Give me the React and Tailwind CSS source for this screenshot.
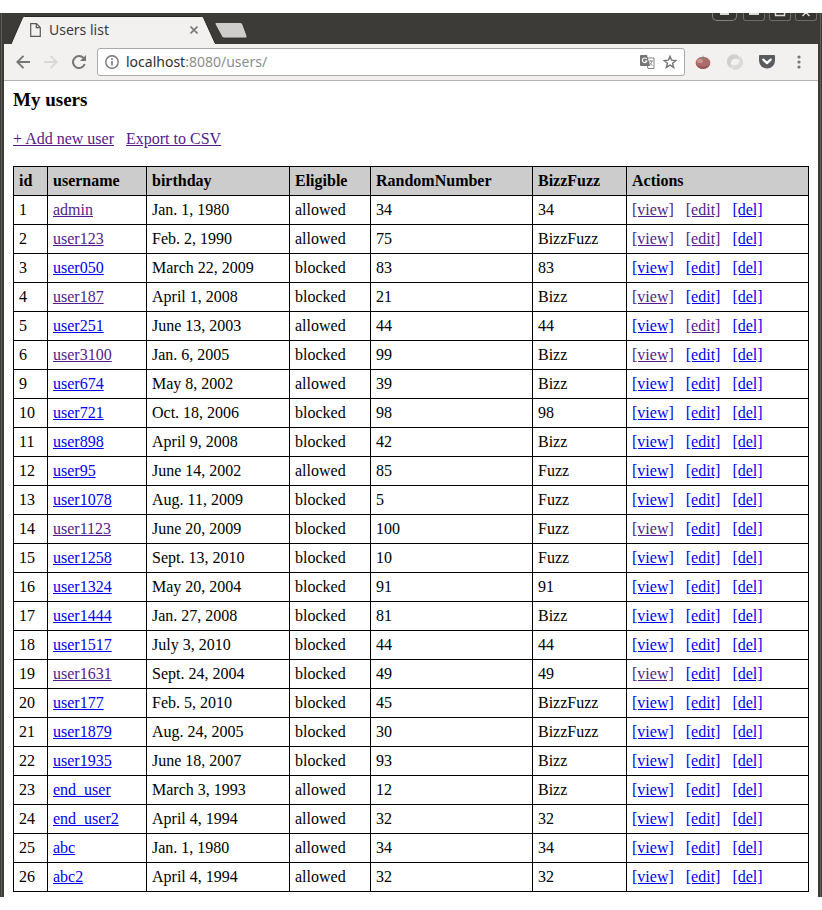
const VISITED = "text-[#551a8b] underline";
const LINK = "text-[#0000ee] underline";

// id, username, birthday, eligible, number, bizzfuzz, visited flags (u = user, v = view, e = edit)
const USERS = [
  [1, "admin", "Jan. 1, 1980", "allowed", 34, "34", "uve"],
  [2, "user123", "Feb. 2, 1990", "allowed", 75, "BizzFuzz", "uve"],
  [3, "user050", "March 22, 2009", "blocked", 83, "83", ""],
  [4, "user187", "April 1, 2008", "blocked", 21, "Bizz", "uv"],
  [5, "user251", "June 13, 2003", "allowed", 44, "44", "e"],
  [6, "user3100", "Jan. 6, 2005", "blocked", 99, "Bizz", "uv"],
  [9, "user674", "May 8, 2002", "allowed", 39, "Bizz", ""],
  [10, "user721", "Oct. 18, 2006", "blocked", 98, "98", ""],
  [11, "user898", "April 9, 2008", "blocked", 42, "Bizz", ""],
  [12, "user95", "June 14, 2002", "allowed", 85, "Fuzz", ""],
  [13, "user1078", "Aug. 11, 2009", "blocked", 5, "Fuzz", ""],
  [14, "user1123", "June 20, 2009", "blocked", 100, "Fuzz", "uv"],
  [15, "user1258", "Sept. 13, 2010", "blocked", 10, "Fuzz", ""],
  [16, "user1324", "May 20, 2004", "blocked", 91, "91", ""],
  [17, "user1444", "Jan. 27, 2008", "blocked", 81, "Bizz", ""],
  [18, "user1517", "July 3, 2010", "blocked", 44, "44", ""],
  [19, "user1631", "Sept. 24, 2004", "blocked", 49, "49", "uv"],
  [20, "user177", "Feb. 5, 2010", "blocked", 45, "BizzFuzz", ""],
  [21, "user1879", "Aug. 24, 2005", "blocked", 30, "BizzFuzz", ""],
  [22, "user1935", "June 18, 2007", "blocked", 93, "Bizz", ""],
  [23, "end_user", "March 3, 1993", "allowed", 12, "Bizz", ""],
  [24, "end_user2", "April 4, 1994", "allowed", 32, "32", ""],
  [25, "abc", "Jan. 1, 1980", "allowed", 34, "34", ""],
  [26, "abc2", "April 4, 1994", "allowed", 32, "32", ""],
];

const COLUMNS = [
  ["id", "w-[34px]"],
  ["username", "w-[99px]"],
  ["birthday", "w-[143px]"],
  ["Eligible", "w-[81px]"],
  ["RandomNumber", "w-[162px]"],
  ["BizzFuzz", "w-[94px]"],
  ["Actions", ""],
];

function WindowButton({ label, children }) {
  return (
    <button aria-label={label} className="h-2 w-[22px] rounded-b-[3px] border border-t-0 border-[#6d6c67] bg-[#353430]">
      <svg viewBox="0 0 20 7" className="block h-[7px] w-5" fill="none" stroke="#dfdbd2" strokeWidth="1.5">
        {children}
      </svg>
    </button>
  );
}

function TitleBar() {
  return (
    <header className="flex h-[31px] items-end bg-[#3c3b37] pr-px pl-[7px]">
      <div className="relative flex h-7 w-[205px] items-center pr-[14px] pl-[19px]">
        <svg viewBox="0 0 205 28" className="absolute inset-0 h-7 w-[205px]">
          <path d="M0 28 11.5 1.8Q12.200 .5 13.500 .5H190.500Q192 .5 192.600 1.800L204.500 28Z" fill="#f2f1f0" stroke="#292824" />
          <path d="M1 27H204V28H1Z" fill="#f2f1f0" />
        </svg>
        <svg viewBox="0 0 11 14" className="relative h-[14px] w-[11px]" fill="none" stroke="#5a5a5a" strokeWidth="1.200">
          <path d="M.7 .7H6.500L10.300 4.500V13.300H.7ZM6.300 .9V4.700H10.100" />
        </svg>
        <span className="relative ml-2 flex-1 font-['Noto_Sans','Open_Sans',sans-serif] text-[14px] leading-5 text-[#3b3b3b]">Users list</span>
        <button aria-label="Close tab" className="relative flex h-4 w-4 items-center justify-center">
          <svg viewBox="0 0 8 8" className="h-2 w-2" stroke="#7a7a7a" strokeWidth="1.600">
            <path d="M.5 .5 7.500 7.500M7.500 .5 .5 7.500" />
          </svg>
        </button>
      </div>
      <button aria-label="New tab" className="-ml-[2px] mb-[5px] h-[17px] w-[34px]">
        <svg viewBox="0 0 34 17" className="h-[17px] w-[34px]">
          <path d="M2 .5H26Q28 .5 28.600 2L33 14Q33.600 16 32 16H10Q8.500 16 7.800 14.500L1 2Q.6 .5 2 .5Z" fill="#cfcdcb" stroke="#292824" strokeWidth=".8" />
        </svg>
      </button>
      <div className="ml-auto flex gap-1 self-start">
        <div className="mr-[2px] flex">
          <button aria-label="Account" className="h-2 w-[25px] rounded-b-[5px] border border-t-0 border-[#85837c] bg-[#353430]">
            <svg viewBox="0 0 23 7" className="block h-[7px] w-[23px]">
              <path d="M7 0H16V2H7Z" fill="#dfdbd2" />
            </svg>
          </button>
        </div>
        <WindowButton label="Minimize"><path d="M5 1H15" strokeWidth="2" /></WindowButton>
        <WindowButton label="Maximize"><path d="M5.500 0V2.500H14.500V0" /></WindowButton>
        <WindowButton label="Close"><path d="M6.500 3 10-.5 13.500 3" /></WindowButton>
      </div>
    </header>
  );
}

function Toolbar() {
  return (
    <nav className="flex h-[37px] items-center border-b border-[#b2b2b2] bg-[#f2f1f0] pl-3 pr-[11px]">
      <div className="flex items-center gap-[14px]">
        <button aria-label="Back">
          <svg viewBox="0 0 14 14" className="block h-[14px] w-[14px]" fill="none" stroke="#757575" strokeWidth="1.900">
            <path d="M14 7H1.500M7.500 .8 1.300 7 7.500 13.200" />
          </svg>
        </button>
        <button aria-label="Forward">
          <svg viewBox="0 0 14 14" className="block h-[14px] w-[14px]" fill="none" stroke="#d9d8d7" strokeWidth="1.900">
            <path d="M0 7H12.500M6.500 .8 12.700 7 6.500 13.200" />
          </svg>
        </button>
        <button aria-label="Reload">
          <svg viewBox="0 0 14 14" className="block h-[14px] w-[14px]" fill="none" stroke="#757575" strokeWidth="2">
            <path d="M12.700 9A6 6 0 1 1 11.500 3" />
            <path d="M14 0V6H8Z" fill="#757575" stroke="none" />
          </svg>
        </button>
      </div>
      <div className="ml-[11px] flex h-7 flex-1 items-center rounded-[3px] border border-[#a9a9a9] bg-white pr-[7px] pl-[7px]">
        <svg viewBox="0 0 14 14" className="h-[14px] w-[14px] shrink-0" fill="none" stroke="#757575" strokeWidth="1.400">
          <circle cx="7" cy="7" r="6.200" />
          <path d="M7 6V10.500M7 3.300V4.900" strokeWidth="1.600" />
        </svg>
        <a href="#" aria-label="Address" className="ml-[7px] flex-1 font-['Noto_Sans','Open_Sans',sans-serif] text-[14px] leading-5 text-[#8d8d8d]">
          <span className="text-[#303030]">localhost</span>:8080/users/
        </a>
        <button aria-label="Translate">
          <svg viewBox="0 0 15 14" className="block h-[14px] w-[15px]">
            <path d="M5.500 3H14V13.500H8Z" fill="#fff" stroke="#858585" />
            <path d="M1 0H7L10 11H1Q0 11 0 10V1Q0 0 1 0Z" fill="#757575" />
            <path d="M6.600 4A2.300 2.300 0 1 0 6.900 6H4.800" fill="none" stroke="#fff" strokeWidth="1.100" />
            <path d="M8.500 6H13M10.800 5V6M12.300 6Q11.500 8.500 9.500 10M9.500 7.500Q10.500 9.500 12.500 10.500" fill="none" stroke="#858585" strokeWidth=".9" />
          </svg>
        </button>
        <button aria-label="Bookmark" className="ml-2">
          <svg viewBox="0 0 14 14" className="block h-[14px] w-[14px]" fill="none" stroke="#757575" strokeWidth="1.400">
            <path d="M7 1.300 8.600 5.200 12.900 5.500 9.600 8.200 10.700 12.400 7 10.100 3.300 12.400 4.400 8.200 1.100 5.500 5.400 5.200Z" />
          </svg>
        </button>
      </div>
      <div className="ml-[10px] flex items-center">
        <button aria-label="Pomodoro">
          <svg viewBox="0 0 16 16" className="block h-4 w-4">
            <ellipse cx="8" cy="8.800" rx="7.400" ry="6" fill="#ad6b6a" />
            <path d="M.9 10Q3 15 8 15T15.100 10Q12 12.800 8 12.800T.9 10Z" fill="#945655" />
            <ellipse cx="5" cy="7" rx="3" ry="2" fill="#c99593" />
            <path d="M5 4 7.500 3.600 8 1 8.800 3.600 11.500 4 9 4.700 8 5.500 7 4.700Z" fill="#858c78" />
          </svg>
        </button>
        <button aria-label="JSON viewer" className="ml-4">
          <svg viewBox="0 0 16 16" className="block h-4 w-4">
            <path d="M10 .8A7.300 7.300 0 0 0 4.500 14.500Q2 8 6 5.200Q9 3.500 12 6Q12.500 3 10 .8Z" fill="#cfcfce" />
            <path d="M6 15.200A7.300 7.300 0 0 0 11.500 1.500Q14 8 10 10.800Q7 12.500 4 10Q3.500 13 6 15.200Z" fill="#dbdad9" />
            <circle cx="8" cy="8" r="2.700" fill="#f2f1f0" />
          </svg>
        </button>
        <button aria-label="Pocket" className="ml-4">
          <svg viewBox="0 0 16 14" className="block h-[14px] w-4">
            <path d="M.8 0H15.200Q16 0 16 1V5.500A8 8 0 0 1 0 5.500V1Q0 0 .8 0Z" fill="#5a5b5f" />
            <path d="M4.300 4.600 8 8.100 11.700 4.600" fill="none" stroke="#fff" strokeWidth="2.200" strokeLinecap="round" strokeLinejoin="round" />
          </svg>
        </button>
        <button aria-label="Menu" className="ml-4 flex h-5 w-4 items-center justify-center">
          <svg viewBox="0 0 4 14" className="block h-[14px] w-1" fill="#757575">
            <circle cx="2" cy="2" r="1.600" />
            <circle cx="2" cy="7" r="1.600" />
            <circle cx="2" cy="12" r="1.600" />
          </svg>
        </button>
      </div>
    </nav>
  );
}

const CELL = "border border-black px-[5px] py-[5px] text-left";

function UserRow({ user }) {
  const [id, name, birthday, eligible, number, bizz, seen] = user;
  return (
    <tr>
      <td className={CELL}>{id}</td>
      <td className={CELL}><a href="#" className={seen.includes("u") ? VISITED : LINK}>{name}</a></td>
      <td className={CELL}>{birthday}</td>
      <td className={CELL}>{eligible}</td>
      <td className={CELL}>{number}</td>
      <td className={CELL}>{bizz}</td>
      <td className={CELL}>
        <div className="flex gap-3">
          <a href="#" className={seen.includes("v") ? VISITED : LINK}>[view]</a>
          <a href="#" className={seen.includes("e") ? VISITED : LINK}>[edit]</a>
          <a href="#" className={LINK}>[del]</a>
        </div>
      </td>
    </tr>
  );
}

export default function App() {
  return (
    <div className="bg-white py-[13px]">
      <div className="border-x border-[#3c3b37] bg-[#5d5c57] px-px">
        <div className="border-x-2 border-[#3c3b37]">
          <TitleBar />
          <Toolbar />
          <main className="bg-white px-[9px] pt-2 pb-[5px] font-['Liberation_Serif',serif] text-[16px] leading-[18px] text-black">
            <h3 className="text-[19px] leading-[22px] font-bold">My users</h3>
            <div className="mt-[19px] flex gap-3">
              <a href="#" className={VISITED}>+ Add new user</a>
              <a href="#" className={VISITED}>Export to CSV</a>
            </div>
            <table className="mt-[18px] w-full table-fixed border-collapse">
              <thead>
                <tr className="bg-[#cccccc]">
                  {COLUMNS.map(([label, width]) => (
                    <th key={label} className={`${CELL} ${width} font-bold`}>{label}</th>
                  ))}
                </tr>
              </thead>
              <tbody>
                {USERS.map((user) => <UserRow key={user[0]} user={user} />)}
              </tbody>
            </table>
          </main>
        </div>
      </div>
    </div>
  );
}
